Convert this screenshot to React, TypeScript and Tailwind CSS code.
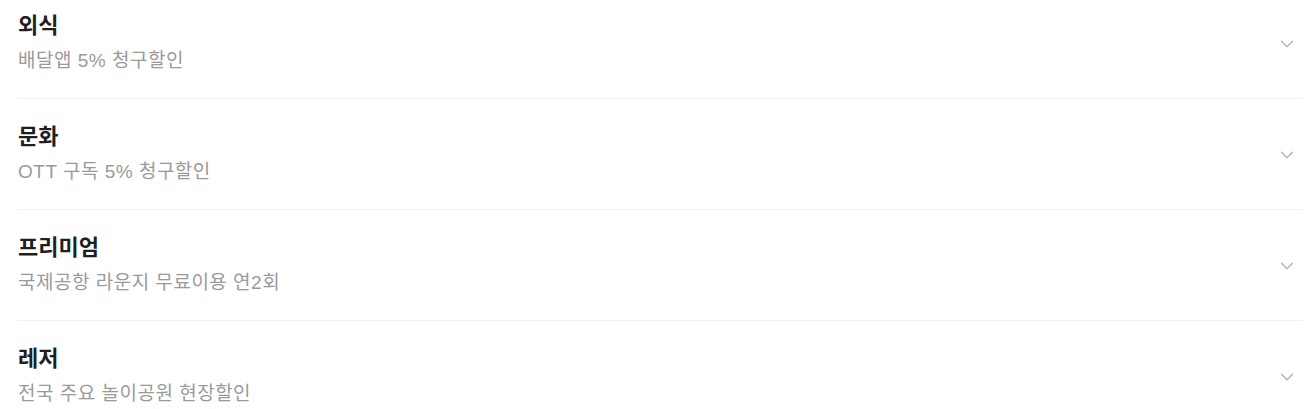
import { ChevronDown } from "lucide-react";

const benefits = [
  { title: "외식", desc: "배달앱 5% 청구할인" },
  { title: "문화", desc: "OTT 구독 5% 청구할인" },
  { title: "프리미엄", desc: "국제공항 라운지 무료이용 연2회" },
  { title: "레저", desc: "전국 주요 놀이공원 현장할인" },
];

export default function App() {
  return (
    <div className="h-screen overflow-hidden bg-white font-['Liberation_Sans','Noto_Sans_CJK_KR',sans-serif]">
      <ul className="pl-[18px] pr-[8px]">
        {benefits.map((b, i) => (
          <li
            key={b.title}
            className={
              "flex items-center justify-between border-b border-[#eef0f3] " +
              (i === 0 ? "pt-[11px] pb-[23px]" : "py-[23px]")
            }
          >
            <div>
              <div className="text-[22px] font-bold leading-[30px] text-[#1f1f1f]">{b.title}</div>
              <div className="mt-[6px] text-[19px] leading-[28px] tracking-[0.5px] text-[#9a9a9a]">{b.desc}</div>
            </div>
            <ChevronDown className="mr-[4px] mt-[2px] h-[22px] w-[22px] text-[#b5b5b5]" strokeWidth={1.6} />
          </li>
        ))}
      </ul>
    </div>
  );
}
